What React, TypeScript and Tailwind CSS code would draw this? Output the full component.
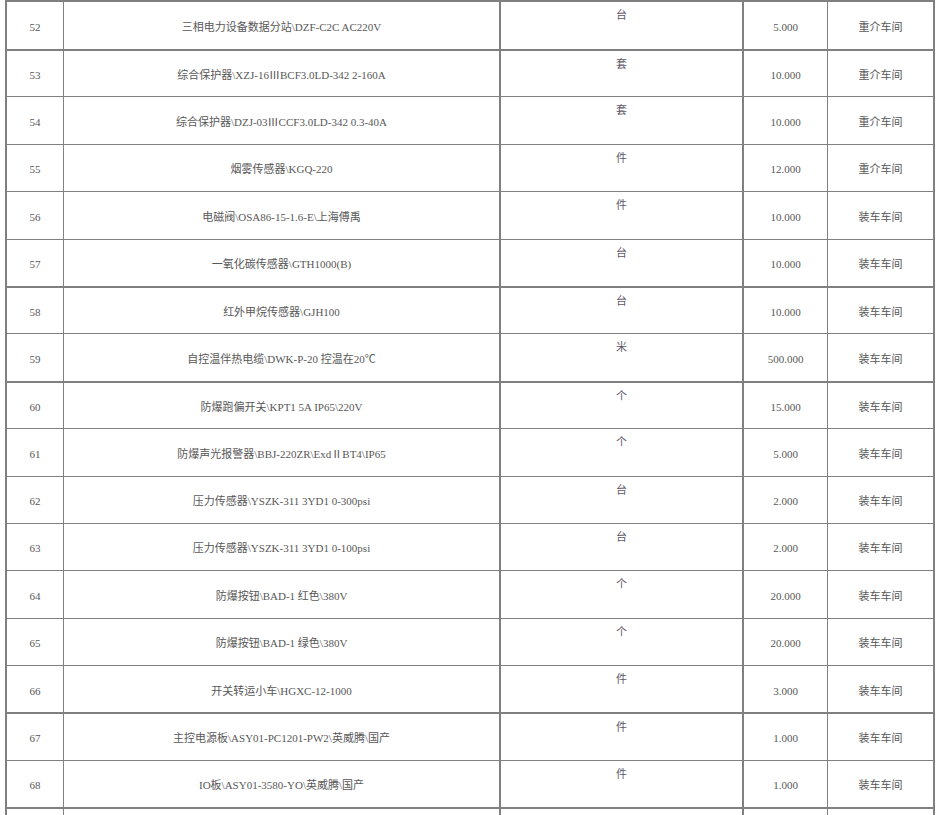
const rows = [
  { no: 52, name: "三相电力设备数据分站\\DZF-C2C AC220V", unit: "台", qty: "5.000", shop: "重介车间", thick: true },
  { no: 53, name: "综合保护器\\XZJ-16ⅢBCF3.0LD-342 2-160A", unit: "套", qty: "10.000", shop: "重介车间", thick: true },
  { no: 54, name: "综合保护器\\DZJ-03ⅢCCF3.0LD-342 0.3-40A", unit: "套", qty: "10.000", shop: "重介车间" },
  { no: 55, name: "烟雾传感器\\KGQ-220", unit: "件", qty: "12.000", shop: "重介车间" },
  { no: 56, name: "电磁阀\\OSA86-15-1.6-E\\上海傅禹", unit: "件", qty: "10.000", shop: "装车车间" },
  { no: 57, name: "一氧化碳传感器\\GTH1000(B)", unit: "台", qty: "10.000", shop: "装车车间" },
  { no: 58, name: "红外甲烷传感器\\GJH100", unit: "台", qty: "10.000", shop: "装车车间", thick: true },
  { no: 59, name: "自控温伴热电缆\\DWK-P-20 控温在20℃", unit: "米", qty: "500.000", shop: "装车车间" },
  { no: 60, name: "防爆跑偏开关\\KPT1 5A IP65\\220V", unit: "个", qty: "15.000", shop: "装车车间", thick: true },
  { no: 61, name: "防爆声光报警器\\BBJ-220ZR\\ExdⅡBT4\\IP65", unit: "个", qty: "5.000", shop: "装车车间" },
  { no: 62, name: "压力传感器\\YSZK-311 3YD1 0-300psi", unit: "台", qty: "2.000", shop: "装车车间" },
  { no: 63, name: "压力传感器\\YSZK-311 3YD1 0-100psi", unit: "台", qty: "2.000", shop: "装车车间" },
  { no: 64, name: "防爆按钮\\BAD-1 红色\\380V", unit: "个", qty: "20.000", shop: "装车车间" },
  { no: 65, name: "防爆按钮\\BAD-1 绿色\\380V", unit: "个", qty: "20.000", shop: "装车车间" },
  { no: 66, name: "开关转运小车\\HGXC-12-1000", unit: "件", qty: "3.000", shop: "装车车间" },
  { no: 67, name: "主控电源板\\ASY01-PC1201-PW2\\英威腾\\国产", unit: "件", qty: "1.000", shop: "装车车间", thick: true },
  { no: 68, name: "IO板\\ASY01-3580-YO\\英威腾\\国产", unit: "件", qty: "1.000", shop: "装车车间" },
];

const App = () => {
  return (
    <div
      className="h-[815px] overflow-hidden bg-white pl-[5px] text-[11px] text-[#585858]"
      style={{ fontFamily: '"Liberation Serif", "Noto Sans CJK SC", serif' }}
    >
      <div className="w-[930px] border-x-2 border-[#808080]">
        {rows.map((r, i) => (
          <div
            key={r.no}
            className={`flex border-[#808080] ${r.thick ? "border-t-2" : "border-t"} ${
              i === 0 ? "h-[49px]" : "h-[47.4px]"
            }`}
          >
            <div className="flex w-[57px] items-center justify-center border-r border-[#808080] pt-[3px]">
              {r.no}
            </div>
            <div className="flex w-[437px] items-center justify-center border-r-2 border-[#808080] pt-[3px]">
              {r.name}
            </div>
            <div className="flex w-[243px] justify-center border-r-2 border-[#808080] pt-[6px] leading-[14px] text-[#5f5868]">
              {r.unit}
            </div>
            <div className="flex w-[84px] items-center justify-center border-r border-[#808080] pt-[3px]">
              {r.qty}
            </div>
            <div className="flex flex-1 items-center justify-center pt-[3px]">{r.shop}</div>
          </div>
        ))}
        <div className="flex h-[40px] border-t-2 border-[#808080]">
          <div className="w-[57px] border-r border-[#808080]" />
          <div className="w-[437px] border-r-2 border-[#808080]" />
          <div className="w-[243px] border-r-2 border-[#808080]" />
          <div className="w-[84px] border-r border-[#808080]" />
          <div className="flex-1" />
        </div>
      </div>
    </div>
  );
};

export default App;
